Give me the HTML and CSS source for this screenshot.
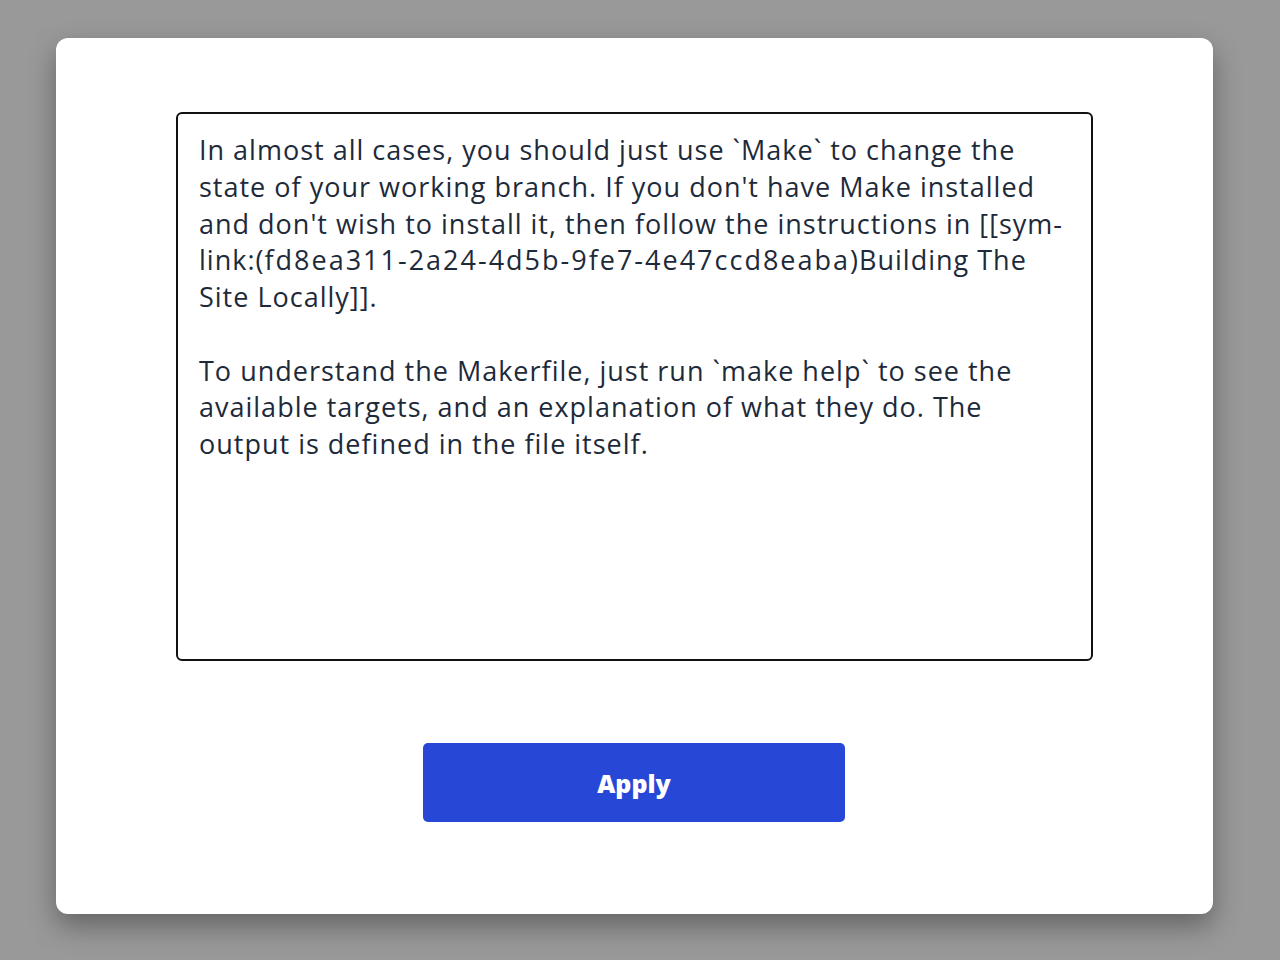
FILE: index.html
```html
<!DOCTYPE html>
<html lang="en">
<head>
<meta charset="utf-8">
<title>Edit</title>
<link rel="stylesheet" href="styles.css">
</head>
<body>
<div class="overlay">
  <div class="modal">
    <div class="editor">
      <div class="line">In almost all cases, you should just use `Make` to change the</div>
      <div class="line">state of your working branch. If you don't have Make installed</div>
      <div class="line">and don't wish to install it, then follow the instructions in [[sym-</div>
      <div class="line">link:(<span class="digits">fd8ea311-2a24-4d5b-9fe7-4e47ccd8eaba</span>)Building The</div>
      <div class="line">Site Locally]].</div>
      <div class="line">&nbsp;</div>
      <div class="line">To understand the Makerfile, just run `make help` to see the</div>
      <div class="line">available targets, and an explanation of what they do. The</div>
      <div class="line">output is defined in the file itself.</div>
    </div>
    <div class="actions">
      <button class="apply">Apply</button>
    </div>
  </div>
</div>
</body>
</html>
```
FILE: styles.css
```css
html, body {
  margin: 0;
  padding: 0;
  height: 100%;
}
body {
  background: #999999;
  font-family: "Open Sans", "Lato", sans-serif;
}
.overlay {
  height: 960px;
  display: flex;
  flex-direction: column;
  align-items: flex-start;
  padding: 38px 0 0 56px;
  box-sizing: border-box;
}
.modal {
  width: 1157px;
  height: 876px;
  background: #ffffff;
  border-radius: 12px;
  box-shadow: 0 12px 28px rgba(0, 0, 0, 0.35);
  box-sizing: border-box;
  padding: 74px 120px 0 120px;
  display: flex;
  flex-direction: column;
}
.editor {
  height: 549px;
  border: 2px solid #111111;
  border-radius: 6px;
  box-sizing: border-box;
  padding: 18px 21px;
  color: #1d2a3a;
  font-size: 27px;
  line-height: 36.75px;
  letter-spacing: 1px;
  overflow: hidden;
}
.line {
  white-space: pre;
}
.digits {
  letter-spacing: 2px;
}
.actions {
  display: flex;
  justify-content: center;
  padding-top: 82px;
}
.apply {
  width: 422px;
  height: 79px;
  margin-left: -1px;
  background: #2747d6;
  color: #ffffff;
  border: none;
  border-radius: 5px;
  font-family: "Open Sans", sans-serif;
  font-weight: 800;
  font-size: 25px;
  cursor: pointer;
}
```
